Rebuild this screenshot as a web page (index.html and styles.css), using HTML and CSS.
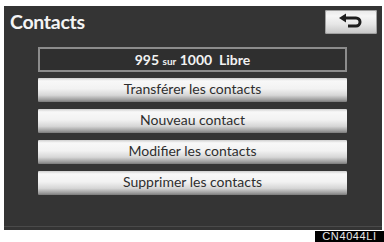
FILE: index.html
```html
<!DOCTYPE html>
<html>
<head>
<meta charset="utf-8">
<link rel="stylesheet" href="styles.css">
</head>
<body>
<div class="screen">
  <div class="header">
    <div class="title">Contacts</div>
    <div class="back">
      <svg width="52" height="24" viewBox="0 0 52 24">
        <path d="M14 8 L21 3.5 L21 12.5 Z" fill="#1e1e1e"/>
        <path d="M20 8 H31 A4 4 0 0 1 31 16 H23" fill="none" stroke="#1e1e1e" stroke-width="3"/>
      </svg>
    </div>
  </div>
  <div class="list">
    <div class="info">995 <span class="small">sur</span> 1000&nbsp; Libre</div>
    <div class="btn">Transférer les contacts</div>
    <div class="btn">Nouveau contact</div>
    <div class="btn">Modifier les contacts</div>
    <div class="btn">Supprimer les contacts</div>
  </div>
</div>
<div class="footer"><span class="code">CN4044LI</span></div>
</body>
</html>
```
FILE: styles.css
```css
html, body {
  margin: 0;
  padding: 0;
  background: #ffffff;
}
body {
  width: 384px;
  height: 242px;
  overflow: hidden;
  font-family: Lato, "Open Sans", sans-serif;
}
.screen {
  width: 378px;
  height: 224px;
  margin: 6px 0 0 4px;
  background: #343434;
  box-shadow: inset 0 -3px 0 #343434, inset 0 -4px 0 #4a4a4a;
  display: flex;
  flex-direction: column;
}
.header {
  display: flex;
  justify-content: space-between;
  align-items: flex-start;
  padding: 4px 5px 0 6px;
  height: 24px;
}
.title {
  color: #f4f4f4;
  font-size: 19.5px;
  font-weight: 700;
  line-height: 24px;
  letter-spacing: -0.3px;
}
.back {
  width: 52px;
  height: 24px;
  border-radius: 2px;
  background: linear-gradient(#e8e8e8 0%, #f6f6f6 25%, #e6e6e6 60%, #c4c4c4 100%);
  box-shadow: inset 0 0 0 1px #a0a0a0;
}
.back svg {
  display: block;
}
.list {
  display: flex;
  flex-direction: column;
  gap: 7px;
  margin: 13px 35px 0 34px;
}
.info {
  height: 21px;
  border: 2px solid #8c8c8c;
  background: #2f2f2f;
  color: #f2f2f2;
  font-size: 14px;
  font-weight: 700;
  line-height: 21px;
  text-align: center;
  margin-bottom: -1px;
}
.info .small {
  font-size: 10px;
}
.btn {
  height: 24px;
  border-radius: 1px;
  background: linear-gradient(#cfcfcf 0%, #f8f8f8 12%, #f2f2f2 45%, #d6d6d6 72%, #9a9a9a 92%, #7a7a7a 100%);
  color: #2e2e2e;
  font-size: 14px;
  line-height: 22px;
  text-align: center;
}
.footer {
  display: flex;
  justify-content: flex-end;
  margin-top: 1px;
}
.code {
  background: #000;
  color: #e8e8e8;
  font-family: "Liberation Sans", Arial, sans-serif;
  font-size: 11px;
  line-height: 11px;
  width: 69px;
  text-align: center;
  letter-spacing: 0.6px;
}
```
